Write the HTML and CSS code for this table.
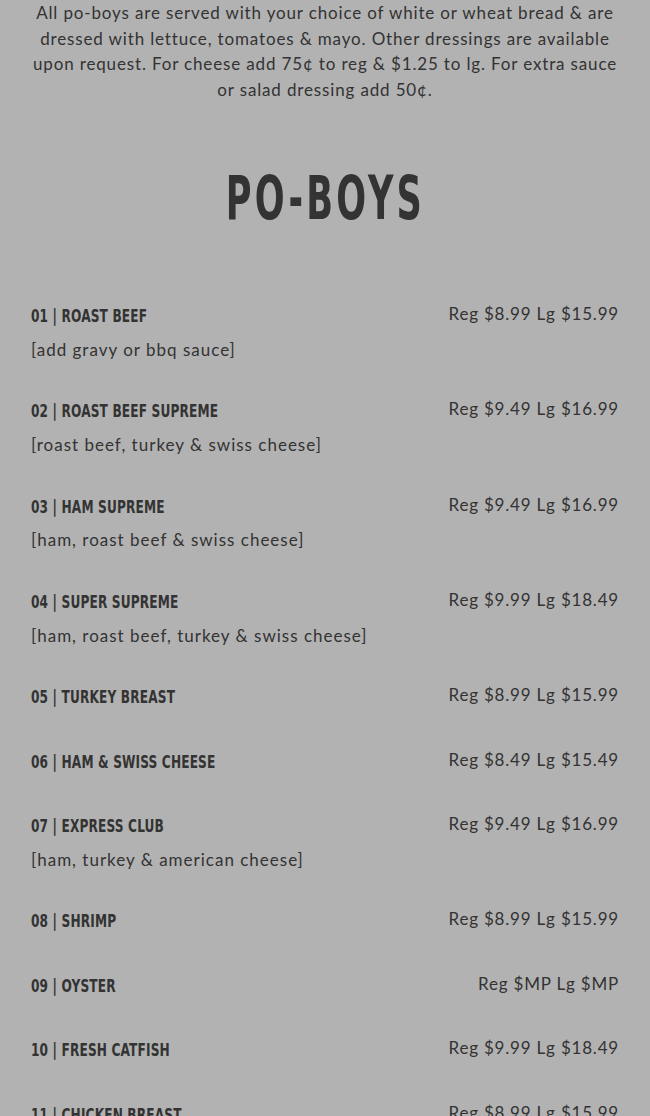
FILE: index.html
```html
<!DOCTYPE html>
<html lang="en">
<head>
<meta charset="utf-8">
<title>Po-Boys</title>
<link rel="stylesheet" href="styles.css">
</head>
<body>
<main class="menu">
  <p class="intro">All po-boys are served with your choice of white or wheat bread &amp; are dressed with lettuce, tomatoes &amp; mayo. Other dressings are available upon request. For cheese add 75¢ to reg &amp; $1.25 to lg. For extra sauce or salad dressing add 50¢.</p>
  <h1 class="section-title"><span>PO-BOYS</span></h1>
  <ul class="items">
    <li class="item">
      <div class="item-info"><h2 class="item-name"><span>01 | ROAST BEEF</span></h2><p class="item-desc">[add gravy or bbq sauce]</p></div>
      <div class="item-price">Reg $8.99 Lg $15.99</div>
    </li>
    <li class="item">
      <div class="item-info"><h2 class="item-name"><span>02 | ROAST BEEF SUPREME</span></h2><p class="item-desc">[roast beef, turkey &amp; swiss cheese]</p></div>
      <div class="item-price">Reg $9.49 Lg $16.99</div>
    </li>
    <li class="item">
      <div class="item-info"><h2 class="item-name"><span>03 | HAM SUPREME</span></h2><p class="item-desc">[ham, roast beef &amp; swiss cheese]</p></div>
      <div class="item-price">Reg $9.49 Lg $16.99</div>
    </li>
    <li class="item">
      <div class="item-info"><h2 class="item-name"><span>04 | SUPER SUPREME</span></h2><p class="item-desc">[ham, roast beef, turkey &amp; swiss cheese]</p></div>
      <div class="item-price">Reg $9.99 Lg $18.49</div>
    </li>
    <li class="item">
      <div class="item-info"><h2 class="item-name"><span>05 | TURKEY BREAST</span></h2></div>
      <div class="item-price">Reg $8.99 Lg $15.99</div>
    </li>
    <li class="item">
      <div class="item-info"><h2 class="item-name"><span>06 | HAM &amp; SWISS CHEESE</span></h2></div>
      <div class="item-price">Reg $8.49 Lg $15.49</div>
    </li>
    <li class="item">
      <div class="item-info"><h2 class="item-name"><span>07 | EXPRESS CLUB</span></h2><p class="item-desc">[ham, turkey &amp; american cheese]</p></div>
      <div class="item-price">Reg $9.49 Lg $16.99</div>
    </li>
    <li class="item">
      <div class="item-info"><h2 class="item-name"><span>08 | SHRIMP</span></h2></div>
      <div class="item-price">Reg $8.99 Lg $15.99</div>
    </li>
    <li class="item">
      <div class="item-info"><h2 class="item-name"><span>09 | OYSTER</span></h2></div>
      <div class="item-price">Reg $MP Lg $MP</div>
    </li>
    <li class="item">
      <div class="item-info"><h2 class="item-name"><span>10 | FRESH CATFISH</span></h2></div>
      <div class="item-price">Reg $9.99 Lg $18.49</div>
    </li>
    <li class="item">
      <div class="item-info"><h2 class="item-name"><span>11 | CHICKEN BREAST</span></h2></div>
      <div class="item-price">Reg $8.99 Lg $15.99</div>
    </li>
  </ul>
</main>
</body>
</html>
```
FILE: styles.css
```css
html, body {
  margin: 0;
  padding: 0;
  background: #b2b2b2;
}
body {
  color: #333333;
  font-family: Lato, "Noto Sans", sans-serif;
}
.menu {
  padding: 0 31px;
}
.intro {
  margin: 0;
  font-size: 17px;
  line-height: 25.5px;
  letter-spacing: 0.85px;
  text-align: center;
}
.section-title {
  margin: 64px 0 0;
  text-align: center;
  font-family: "DejaVu Sans Condensed", sans-serif;
  font-weight: 700;
  font-size: 60px;
  line-height: 64px;
  letter-spacing: 5px;
}
.section-title span {
  display: inline-block;
  transform: scaleX(0.65);
}
.items {
  list-style: none;
  margin: 74px 0 0;
  padding: 0;
  display: flex;
  flex-direction: column;
  gap: 40.5px;
}
.item {
  display: flex;
  justify-content: space-between;
  align-items: flex-start;
}
.item-name {
  margin: 0;
  font-family: "DejaVu Sans Condensed", sans-serif;
  font-weight: 700;
  font-size: 18px;
  line-height: 24px;
  letter-spacing: 0.2px;
  white-space: nowrap;
}
.item-name span {
  display: inline-block;
  transform: scaleX(0.75);
  transform-origin: left center;
}
.item-desc {
  margin: 12.75px 0 0;
  font-size: 17px;
  line-height: 18px;
  letter-spacing: 1px;
}
.item-price {
  font-size: 17px;
  line-height: 20px;
  letter-spacing: 0.8px;
  white-space: nowrap;
}
```
